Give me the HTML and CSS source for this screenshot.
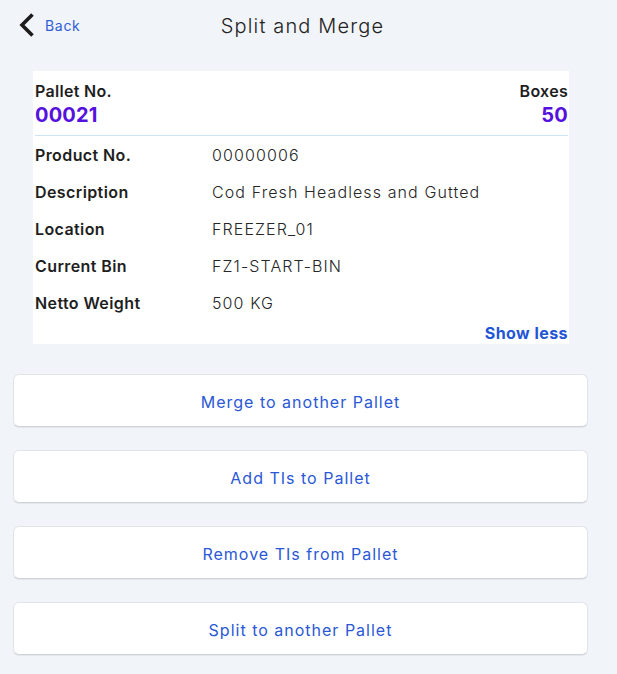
FILE: index.html
```html
<!DOCTYPE html>
<html>
<head>
<meta charset="utf-8">
<link rel="stylesheet" href="styles.css">
</head>
<body>
<div class="page">
  <header class="topbar">
    <a class="back">
      <svg class="chev" width="17" height="24" viewBox="0 0 17 24"><path d="M14.5 1.5 L4 12 L14.5 22.5" fill="none" stroke="#1c1c1c" stroke-width="3.6" stroke-linecap="butt" stroke-linejoin="miter"/></svg>
      <span>Back</span>
    </a>
    <h1 class="title">Split and Merge</h1>
  </header>
  <section class="card">
    <div class="head">
      <div class="col">
        <div class="lbl">Pallet No.</div>
        <div class="num">00021</div>
      </div>
      <div class="col right">
        <div class="lbl">Boxes</div>
        <div class="num">50</div>
      </div>
    </div>
    <div class="rows">
      <div class="row"><div class="k">Product No.</div><div class="v">00000006</div></div>
      <div class="row"><div class="k">Description</div><div class="v">Cod Fresh Headless and Gutted</div></div>
      <div class="row"><div class="k">Location</div><div class="v">FREEZER_01</div></div>
      <div class="row"><div class="k">Current Bin</div><div class="v">FZ1-START-BIN</div></div>
      <div class="row"><div class="k">Netto Weight</div><div class="v">500 KG</div></div>
    </div>
    <div class="more"><a>Show less</a></div>
  </section>
  <nav class="actions">
    <button class="btn">Merge to another Pallet</button>
    <button class="btn">Add TIs to Pallet</button>
    <button class="btn">Remove TIs from Pallet</button>
    <button class="btn">Split to another Pallet</button>
  </nav>
</div>
</body>
</html>
```
FILE: styles.css
```css
html, body {
  margin: 0;
  padding: 0;
  background: #f1f4f8;
}
body {
  font-family: Inter, "DejaVu Sans", sans-serif;
  color: #1e1e1e;
}
.page {
  width: 617px;
  height: 674px;
  overflow: hidden;
}
.topbar {
  position: relative;
  height: 52px;
  display: flex;
  align-items: center;
}
.back {
  display: flex;
  align-items: center;
  padding-left: 18px;
  color: #2f5fd8;
  font-size: 14px;
  gap: 10px;
  margin-top: -2px;
  letter-spacing: 0.7px;
}
.chev { display: block; }
.title {
  position: absolute;
  left: 0;
  right: 12px;
  top: 14px;
  margin: 0;
  text-align: center;
  font-size: 20px;
  font-weight: 300;
  color: #222;
  letter-spacing: 1.15px;
}
.card {
  margin: 19px 48px 0 33px;
  background: #fff;
  padding: 10px 1px 1px 2px;
}
.head {
  display: flex;
  justify-content: space-between;
  padding-bottom: 7px;
  border-bottom: 1px solid #cfe2fa;
}
.col.right { text-align: right; }
.lbl {
  font-weight: 600;
  font-size: 16px;
  line-height: 21px;
  letter-spacing: 0.3px;
}
.num {
  margin-top: 1px;
  font-weight: 700;
  font-size: 20px;
  line-height: 25px;
  color: #5512de;
  letter-spacing: 0.2px;
}
.rows { padding-top: 0; }
.row {
  display: flex;
  height: 37px;
  align-items: center;
  font-size: 16px;
}
.k {
  width: 177px;
  font-weight: 600;
  letter-spacing: 0.4px;
}
.v {
  color: #262626;
  font-weight: 300;
  letter-spacing: 1.1px;
}
.more {
  text-align: right;
  margin-top: 2px;
}
.more a {
  color: #1f55d6;
  font-weight: 700;
  font-size: 16px;
  letter-spacing: 0.45px;
}
.actions {
  display: flex;
  flex-direction: column;
  gap: 23px;
  padding: 30px 29px 0 13px;
}
.btn {
  height: 53px;
  padding: 2px 0 0;
  background: #fff;
  border: 1px solid #e1e4e9;
  border-bottom: 1px solid #cfd3d9;
  border-radius: 6px;
  font-family: inherit;
  font-size: 16px;
  font-weight: 400;
  letter-spacing: 1px;
  color: #2a58d6;
  box-shadow: 0 1px 1px rgba(0,0,0,0.06);
}
```
